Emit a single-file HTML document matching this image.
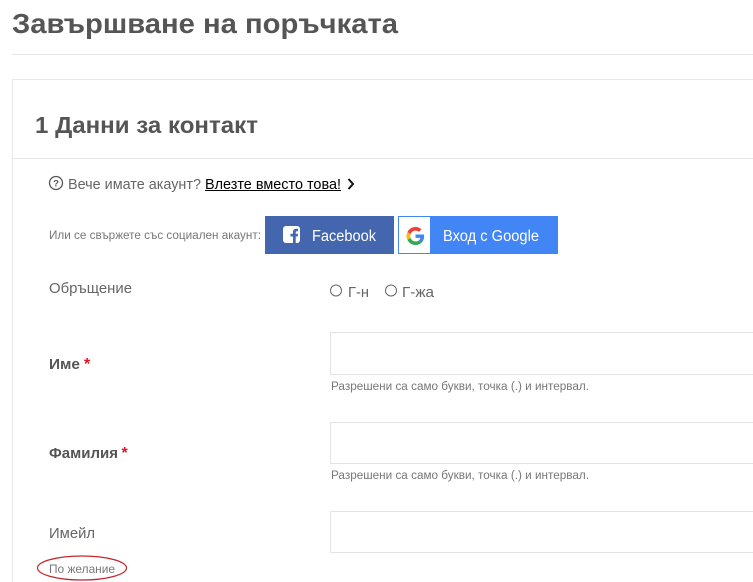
<!DOCTYPE html>
<html lang="bg"><head><meta charset="utf-8"><title>Завършване на поръчката</title>
<style>
html,body{margin:0;padding:0;background:#fff;width:753px;height:582px;overflow:hidden}
svg{display:block}
text{font-family:"Liberation Sans","DejaVu Sans",sans-serif;fill:#666}
.b{font-weight:bold;fill:#555}
</style></head><body>
<svg width="753" height="582" viewBox="0 0 753 582" xmlns="http://www.w3.org/2000/svg">
<rect x="12" y="54" width="741" height="1" fill="#e6e6e6"/>
<rect x="12" y="79" width="741" height="1" fill="#e8e8e8"/>
<rect x="12" y="79" width="1" height="503" fill="#e8e8e8"/>
<rect x="13" y="158" width="740" height="1" fill="#e8e8e8"/>
<text class="b" x="12" y="33" font-size="28" textLength="386" lengthAdjust="spacingAndGlyphs">Завършване на поръчката</text>
<text class="b" x="35" y="133" font-size="23" textLength="223" lengthAdjust="spacingAndGlyphs">1 Данни за контакт</text>
<circle cx="56" cy="183" r="6.500" fill="none" stroke="#555" stroke-width="1.300"/>
<text x="56" y="186.500" font-size="9.500" text-anchor="middle" style="fill:#555;font-weight:bold">?</text>
<text x="68" y="189" font-size="14.500" textLength="133" lengthAdjust="spacingAndGlyphs">Вече имате акаунт?</text>
<text x="205" y="189" font-size="14.500" textLength="136" lengthAdjust="spacingAndGlyphs" style="fill:#000">Влезте вместо това!</text>
<rect x="205" y="190" width="136" height="1" fill="#000"/>
<path d="M348.500 179 L353 184 L348.500 189" fill="none" stroke="#111" stroke-width="2"/>
<text x="49" y="239" font-size="11.500" textLength="212" lengthAdjust="spacingAndGlyphs" style="fill:#777">Или се свържете със социален акаунт:</text>
<rect x="265" y="216" width="129" height="38" fill="#4366ae"/>
<rect x="283" y="226" width="17" height="17" rx="3" fill="#fff"/>
<path d="M293 243V236.500H290.500V233.800H293V232C293 229.800 294.300 228.700 296.200 228.700H298V231.200H296.800C296 231.200 295.700 231.600 295.700 232.300V233.800H298L297.600 236.500H295.700V243Z" fill="#4366ae"/>
<text x="312" y="241" font-size="15.500" textLength="64" lengthAdjust="spacingAndGlyphs" style="fill:#fff">Facebook</text>
<rect x="398" y="216" width="160" height="38" fill="#4285f4"/>
<rect x="399" y="217" width="31" height="36" fill="#fff"/>
<g transform="translate(406.500,227) scale(0.375)">
<path fill="#EA4335" d="M24 9.500c3.540 0 6.710 1.220 9.210 3.600l6.850-6.850C35.900 2.380 30.470 0 24 0 14.620 0 6.510 5.380 2.560 13.220l7.980 6.190C12.430 13.720 17.740 9.500 24 9.500z"/>
<path fill="#4285F4" d="M46.980 24.550c0-1.570-.15-3.090-.38-4.550H24v9.020h12.940c-.58 2.960-2.260 5.480-4.780 7.180l7.730 6c4.510-4.180 7.090-10.360 7.090-17.650z"/>
<path fill="#FBBC05" d="M10.530 28.590c-.48-1.450-.76-2.990-.76-4.590s.27-3.140.76-4.590l-7.980-6.190C.92 16.460 0 20.120 0 24c0 3.880.92 7.540 2.560 10.780l7.970-6.190z"/>
<path fill="#34A853" d="M24 48c6.480 0 11.930-2.130 15.890-5.810l-7.730-6c-2.150 1.450-4.920 2.300-8.160 2.300-6.260 0-11.570-4.220-13.470-9.910l-7.980 6.190C6.510 42.620 14.620 48 24 48z"/>
</g>
<text x="443" y="241" font-size="15.500" textLength="96" lengthAdjust="spacingAndGlyphs" style="fill:#fff">Вход с Google</text>
<text x="49" y="293" font-size="15" textLength="83" lengthAdjust="spacingAndGlyphs">Обръщение</text>
<circle cx="336" cy="290.500" r="5.500" fill="#fff" stroke="#666" stroke-width="1"/>
<text x="348" y="297" font-size="15" textLength="21" lengthAdjust="spacingAndGlyphs">Г-н</text>
<circle cx="391" cy="290.500" r="5.500" fill="#fff" stroke="#666" stroke-width="1"/>
<text x="402" y="297" font-size="15" textLength="32" lengthAdjust="spacingAndGlyphs">Г-жа</text>
<text class="b" x="49" y="369" font-size="15" textLength="31" lengthAdjust="spacingAndGlyphs">Име</text>
<text x="84" y="369" font-size="16" font-weight="bold" style="fill:#e0141e">*</text>
<rect x="330.500" y="332.500" width="430" height="42" fill="#fff" stroke="#e3e3e3"/>
<text x="331" y="390" font-size="11.500" textLength="258" lengthAdjust="spacingAndGlyphs" style="fill:#777">Разрешени са само букви, точка (.) и интервал.</text>
<text class="b" x="49" y="458" font-size="15" textLength="69" lengthAdjust="spacingAndGlyphs">Фамилия</text>
<text x="121.500" y="458" font-size="16" font-weight="bold" style="fill:#e0141e">*</text>
<rect x="330.500" y="422.500" width="430" height="41" fill="#fff" stroke="#e3e3e3"/>
<text x="331" y="479" font-size="11.500" textLength="258" lengthAdjust="spacingAndGlyphs" style="fill:#777">Разрешени са само букви, точка (.) и интервал.</text>
<text x="49" y="538" font-size="15" textLength="46" lengthAdjust="spacingAndGlyphs">Имейл</text>
<rect x="330.500" y="511.500" width="430" height="41" fill="#fff" stroke="#e3e3e3"/>
<text x="49" y="573" font-size="12" textLength="66" lengthAdjust="spacingAndGlyphs" style="fill:#777">По желание</text>
<ellipse cx="82" cy="568" rx="44.500" ry="12" fill="none" stroke="#c4262e" stroke-width="1.200"/>
</svg>
</body></html>
